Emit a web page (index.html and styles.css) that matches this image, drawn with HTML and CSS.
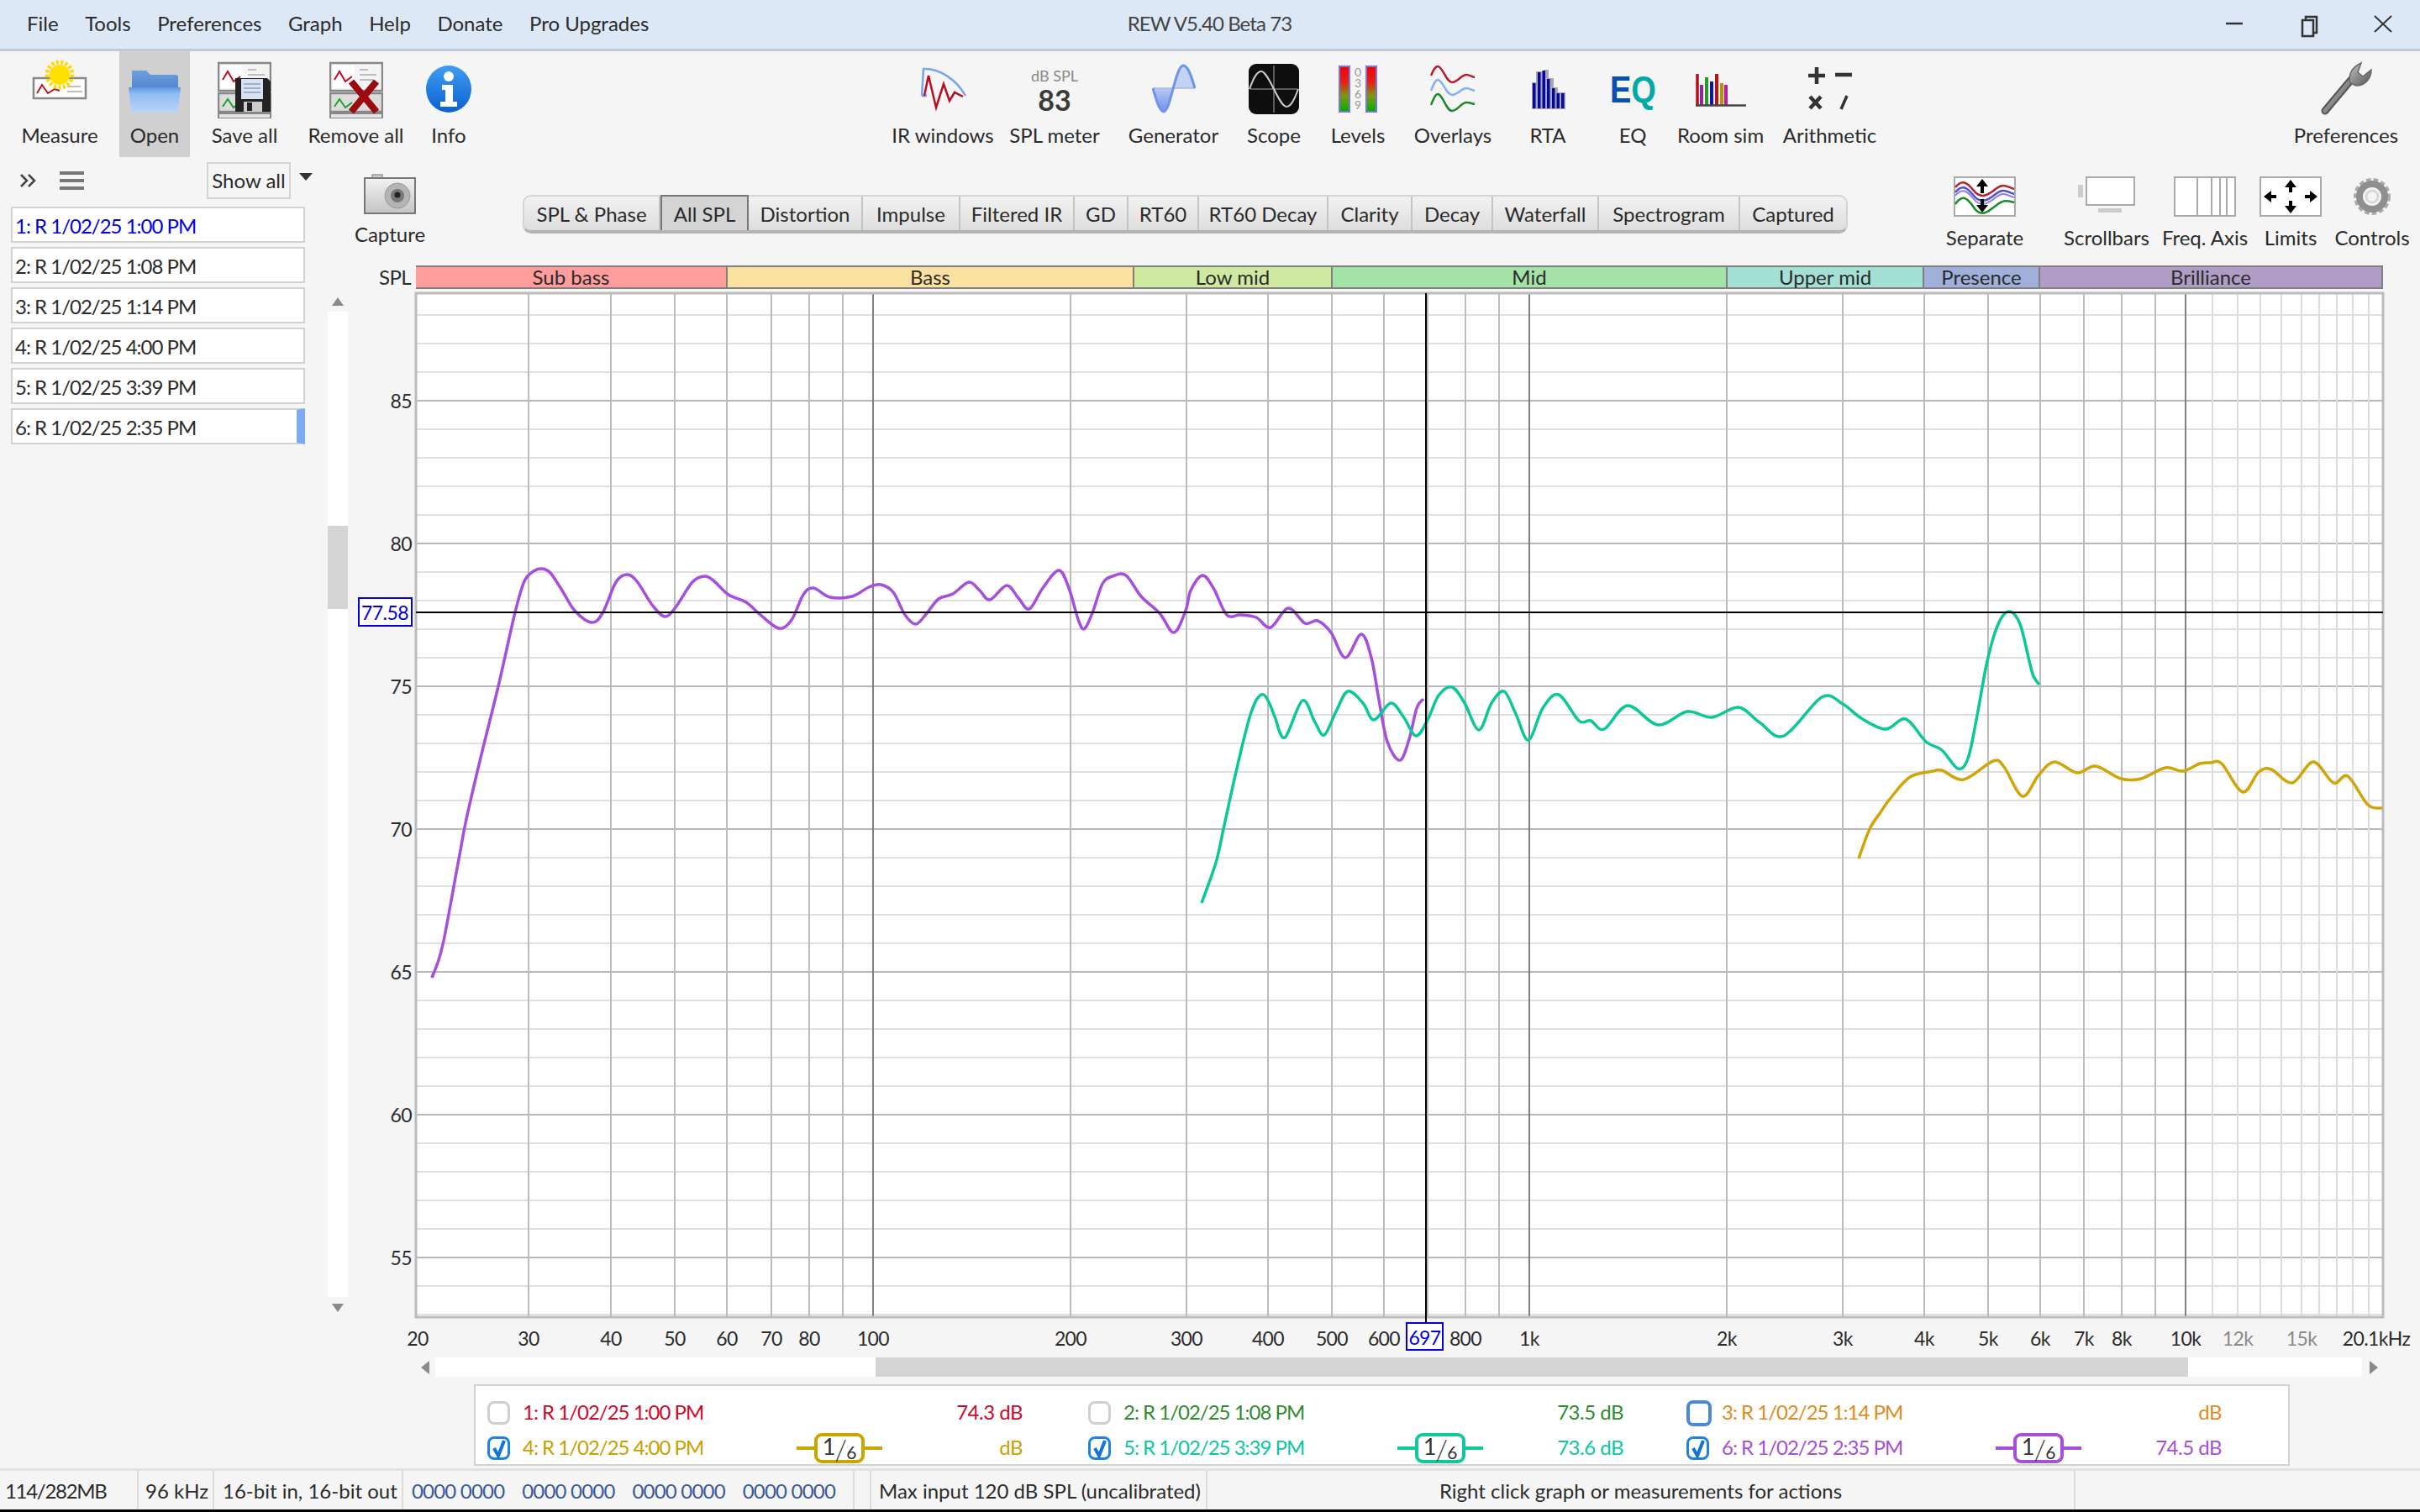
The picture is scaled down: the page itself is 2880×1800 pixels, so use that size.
FILE: index.html
```html
<!DOCTYPE html>
<html lang="en">
<head>
    <meta charset="UTF-8">
    <title>REW V5.40 Beta 73</title>
    <link rel="stylesheet" href="styles.css">
</head>
<body>
<svg class="defs" width="0" height="0">
    <defs>
        <linearGradient id="folderBack" x1="0" y1="0" x2="0" y2="1"><stop offset="0" stop-color="#6f9fe0"/><stop offset="1" stop-color="#4f82cc"/></linearGradient>
        <linearGradient id="folderFront" x1="0" y1="0" x2="0" y2="1"><stop offset="0" stop-color="#5e97e2"/><stop offset="0.25" stop-color="#8fbcf0"/><stop offset="1" stop-color="#b9d6f7"/></linearGradient>
        <linearGradient id="infoBlue" x1="0" y1="0" x2="0" y2="1"><stop offset="0" stop-color="#3f9cf2"/><stop offset="1" stop-color="#0a62d0"/></linearGradient>
        <linearGradient id="genFill" x1="0" y1="0" x2="0" y2="1"><stop offset="0" stop-color="#b9c8f4"/><stop offset="1" stop-color="#6f93ea"/></linearGradient>
        <linearGradient id="level" x1="0" y1="0" x2="0" y2="1"><stop offset="0" stop-color="#f00010"/><stop offset="0.35" stop-color="#e82010"/><stop offset="0.65" stop-color="#7a9a10"/><stop offset="1" stop-color="#00b000"/></linearGradient>
        <linearGradient id="chrome" x1="0" y1="0" x2="1" y2="1"><stop offset="0" stop-color="#c9c9c9"/><stop offset="0.5" stop-color="#8a8a8a"/><stop offset="1" stop-color="#555"/></linearGradient>
        <linearGradient id="camera" x1="0" y1="0" x2="0" y2="1"><stop offset="0" stop-color="#f2f2f2"/><stop offset="1" stop-color="#c4c4c4"/></linearGradient>
        <symbol id="cards" viewBox="0 0 64 80">
            <rect x="1" y="14" width="62" height="33" fill="#f4f4f4" stroke="#888" stroke-width="2.5"/>
            <rect x="4" y="17" width="26" height="27" fill="#fff"/>
            <path d="M6 34l6-10 7 12 8-6" fill="none" stroke="#c01020" stroke-width="2"/>
            <path d="M36 22h10M36 28h20M36 34h16" stroke="#aaa" stroke-width="1.5"/>
            <rect x="1" y="50" width="62" height="22" fill="#ddd" stroke="#888" stroke-width="2.5"/>
            <path d="M6 66l6-9 7 10 8-6" fill="none" stroke="#20a030" stroke-width="2"/>
            <rect x="1" y="74" width="62" height="6" fill="#e4e4e4" stroke="#888" stroke-width="2"/>
        </symbol>
        <symbol id="tick" viewBox="0 0 28 28">
            <path d="M8 14l5 9 7-18" fill="none" stroke="#1373d8" stroke-width="4"/>
        </symbol>
    </defs>
</svg>

<div class="app">
    <header class="titlebar">
        <nav class="menu">
            <span>File</span><span>Tools</span><span>Preferences</span><span>Graph</span><span>Help</span><span>Donate</span><span>Pro Upgrades</span>
        </nav>
        <div class="title">REW V5.40 Beta 73</div>
        <div class="winbtns">
            <svg width="230" height="40" viewBox="0 0 230 40">
                <path d="M0 20h20" stroke="#333" stroke-width="2.5"/>
                <path d="M91 16h13v19h-13zM95 16v-4h13v19h-4" fill="none" stroke="#333" stroke-width="2.5"/>
                <path d="M177 11l20 19M197 11l-20 19" stroke="#333" stroke-width="2"/>
            </svg>
        </div>
    </header>

    <section class="ribbon">
        <div class="tool">
            <svg width="70" height="80" viewBox="0 0 70 80">
                <rect x="4" y="32" width="62" height="24" fill="#fff" stroke="#888" stroke-width="2.5"/>
                <path d="M8 50l6-10 7 10 8-5 6 2" fill="none" stroke="#c01020" stroke-width="2"/>
                <path d="M44 42h16M44 48h18" stroke="#aaa" stroke-width="1.5"/>
                <circle cx="35" cy="28" r="12" fill="#ffe000"/>
                <circle cx="35" cy="28" r="15" fill="none" stroke="#ffd800" stroke-width="5" stroke-dasharray="3 2.5"/>
            </svg>
            <span class="label">Measure</span>
        </div>
        <div class="tool active">
            <svg width="64" height="80" viewBox="0 0 64 80">
                <path d="M5 23h17l5 5h30q3 0 3 3v16H5z" fill="url(#folderBack)"/>
                <path d="M1 43h62l-3 29q0 1-2 1H6q-2 0-2-1z" fill="url(#folderFront)"/>
            </svg>
            <span class="label">Open</span>
        </div>
        <div class="tool">
            <svg width="64" height="80" viewBox="0 0 64 80">
                <use href="#cards" width="64" height="80"/>
                <path d="M21 32h38l4 4v36H21z" fill="#222"/>
                <rect x="28" y="33" width="26" height="24" fill="#d8e2f2"/>
                <path d="M31 39h20M31 44h20M31 49h20" stroke="#8aa0c0" stroke-width="1.5"/>
                <rect x="31" y="60" width="22" height="12" fill="#ccc"/>
                <rect x="35" y="61" width="6" height="10" fill="#222"/>
            </svg>
            <span class="label">Save all</span>
        </div>
        <div class="tool">
            <svg width="64" height="80" viewBox="0 0 64 80">
                <use href="#cards" width="64" height="80"/>
                <path d="M26 36l30 36M56 36l-30 36" stroke="#9c0a10" stroke-width="8"/>
            </svg>
            <span class="label">Remove all</span>
        </div>
        <div class="tool">
            <svg width="56" height="80" viewBox="0 0 56 80">
                <ellipse cx="28" cy="45" rx="27" ry="28" fill="url(#infoBlue)"/>
                <circle cx="28" cy="30" r="6" fill="#fff"/>
                <path d="M20 40h13v20h5v6H18v-6h6V46h-4z" fill="#fff"/>
            </svg>
            <span class="label">Info</span>
        </div>
        <div></div>
        <div class="tool">
            <svg width="56" height="80" viewBox="0 0 56 80">
                <path d="M3 53L5 21C25 20 45 35 55 53" fill="none" stroke="#7da4ec" stroke-width="2.5"/>
                <path d="M3 53h6" stroke="#7da4ec" stroke-width="3"/>
                <path d="M6 53L11 29 20 67 29 39 36 59 42 49 52 54" fill="none" stroke="#b80e1e" stroke-width="2.5"/>
            </svg>
            <span class="label">IR windows</span>
        </div>
        <div class="tool">
            <div class="meter"><span class="meter-unit">dB SPL</span><span class="meter-val">83</span></div>
            <span class="label">SPL meter</span>
        </div>
        <div class="tool">
            <svg width="52" height="80" viewBox="0 0 52 80">
                <path d="M1 44C5 58 9 72 14 72 18 72 21 58 24 44z" fill="url(#genFill)"/>
                <path d="M24 44C28 30 32 17 37 17 43 17 47 30 51 44z" fill="#c4d2f6"/>
                <path d="M1 44h50" stroke="#a8b8d8" stroke-width="1.5"/>
                <path d="M1 44C5 58 9 72 14 72 22 72 28 17 37 17 43 17 47 30 51 44" fill="none" stroke="#6d95ec" stroke-width="3"/>
            </svg>
            <span class="label">Generator</span>
        </div>
        <div class="tool">
            <svg width="60" height="80" viewBox="0 0 60 80">
                <rect x="0" y="15" width="60" height="60" rx="9" fill="#0e0e0e"/>
                <path d="M2 45h56M30 17v56" stroke="#777" stroke-width="1.5"/>
                <path d="M1 45C6 31 10 24 15 24 24 24 36 66 45 66 50 66 54 59 59 45" fill="none" stroke="#ccc" stroke-width="2"/>
            </svg>
            <span class="label">Scope</span>
        </div>
        <div class="tool">
            <svg width="46" height="80" viewBox="0 0 46 80">
                <rect x="1" y="18" width="12" height="54" fill="url(#level)" stroke="#7878dc" stroke-width="2"/>
                <rect x="33" y="18" width="12" height="54" fill="url(#level)" stroke="#7878dc" stroke-width="2"/>
                <text class="scale" x="23" y="30">0</text>
                <text class="scale" x="23" y="43">3</text>
                <text class="scale" x="23" y="56">6</text>
                <text class="scale" x="23" y="69">9</text>
            </svg>
            <span class="label">Levels</span>
        </div>
        <div class="tool">
            <svg width="54" height="80" viewBox="0 0 54 80">
                <path d="M1 29C4 22 6 18 9 18 15 18 19 37 26 37 33 37 37 28 43 28 47 28 49 30 53 31" fill="none" stroke="#b02030" stroke-width="2.5"/>
                <path d="M1 47C4 40 6 34 9 34 15 34 19 52 26 52 33 52 37 44 43 44 47 44 49 46 53 47" fill="none" stroke="#86aef2" stroke-width="2.5"/>
                <path d="M1 64C4 57 6 51 9 51 15 51 19 71 26 71 33 71 37 61 43 61 47 61 49 62 53 63" fill="none" stroke="#1c8a2a" stroke-width="2.5"/>
            </svg>
            <span class="label">Overlays</span>
        </div>
        <div class="tool">
            <svg width="43" height="80" viewBox="0 0 43 80">
                <path d="M2 69V37h5V24h10V22h5v10h6v11h5v6h9v20z" fill="#a8a8b4"/>
                <path d="M3 68V38h3.500v30zM9 68V25h3.500v43zM14.500 68V23H18v45zM20 68V33h3.500v35zM26 68V44h3.500v24zM31.500 68V50H35v18zM37 68V50h3.500v18z" fill="#08089a"/>
            </svg>
            <span class="label">RTA</span>
        </div>
        <div class="tool">
            <svg width="56" height="80" viewBox="0 0 56 80">
                <text class="eq" x="0" y="0" transform="translate(1 61) scale(1 1.170)"><tspan class="eq-e">E</tspan><tspan class="eq-q">Q</tspan></text>
            </svg>
            <span class="label">EQ</span>
        </div>
        <div class="tool">
            <svg width="60" height="80" viewBox="0 0 60 80">
                <path d="M2 27v37" stroke="#b01020" stroke-width="3.500"/>
                <path d="M7 40v24" stroke="#a020a0" stroke-width="4"/>
                <path d="M13 31v33" stroke="#20a020" stroke-width="4"/>
                <path d="M19 36v28" stroke="#1010c0" stroke-width="4"/>
                <path d="M25 27v37" stroke="#c01010" stroke-width="4"/>
                <path d="M31 38v26" stroke="#c09000" stroke-width="4"/>
                <path d="M36 40v24" stroke="#b020a0" stroke-width="4"/>
                <path d="M0 64.500h60" stroke="#444" stroke-width="2.500"/>
            </svg>
            <span class="label">Room sim</span>
        </div>
        <div class="tool">
            <svg width="56" height="80" viewBox="0 0 56 80">
                <path d="M12 19v20M2 29h20M34 28h20" stroke="#333" stroke-width="4.500"/>
                <path d="M4 54l13 14M17 54L4 68" stroke="#333" stroke-width="4.500"/>
                <path d="M48 53l-7 16" stroke="#333" stroke-width="3.500"/>
            </svg>
            <span class="label">Arithmetic</span>
        </div>
        <div></div>
        <div class="tool">
            <svg width="64" height="80" viewBox="0 0 64 80">
                <path d="M7 71L38 34" stroke="#555" stroke-width="9" stroke-linecap="round"/>
                <path d="M7 71L38 34" stroke="url(#chrome)" stroke-width="5" stroke-linecap="round"/>
                <path d="M37 38C34 28 39 19 50 14l-4 11 6 5 10-8C62 33 54 41 44 41z" fill="url(#chrome)" stroke="#666" stroke-width="1.500"/>
            </svg>
            <span class="label">Preferences</span>
        </div>
    </section>

    <div class="content">
        <aside class="side">
            <div class="side-tools">
                <svg class="chevrons" width="22" height="18" viewBox="0 0 22 18">
                    <path d="M2 2l7 7-7 7M11 2l7 7-7 7" fill="none" stroke="#444" stroke-width="2.500"/>
                </svg>
                <span class="burger"></span>
                <span class="combo">Show all</span>
                <span class="combo-arrow"></span>
            </div>
            <ul class="meas-list">
                <li class="first">1: R 1/02/25 1:00 PM</li>
                <li>2: R 1/02/25 1:08 PM</li>
                <li>3: R 1/02/25 1:14 PM</li>
                <li>4: R 1/02/25 4:00 PM</li>
                <li>5: R 1/02/25 3:39 PM</li>
                <li class="current">6: R 1/02/25 2:35 PM</li>
            </ul>
        </aside>

        <main class="main">
            <div class="toolbar2">
                <div class="tool2 capture">
                    <svg width="62" height="75" viewBox="0 0 62 75">
                        <path d="M10 25v-4h12v4" fill="#ccc" stroke="#999" stroke-width="1.500"/>
                        <rect x="1" y="25" width="60" height="42" fill="url(#camera)" stroke="#777" stroke-width="2"/>
                        <circle cx="40" cy="46" r="15" fill="#b4b4b4" stroke="#999"/>
                        <circle cx="40" cy="46" r="8" fill="#777"/>
                        <circle cx="40" cy="45" r="3.500" fill="#222"/>
                    </svg>
                    <span class="label">Capture</span>
                </div>
                <div class="tabs">
                    <span class="tab w164">SPL &amp; Phase</span>
                    <span class="tab w105 selected">All SPL</span>
                    <span class="tab w136">Distortion</span>
                    <span class="tab w116">Impulse</span>
                    <span class="tab w136">Filtered IR</span>
                    <span class="tab w64">GD</span>
                    <span class="tab w84">RT60</span>
                    <span class="tab w154">RT60 Decay</span>
                    <span class="tab w100">Clarity</span>
                    <span class="tab w96">Decay</span>
                    <span class="tab w126">Waterfall</span>
                    <span class="tab w168">Spectrogram</span>
                    <span class="tab w128">Captured</span>
                </div>
                <div class="tool2 separate">
                    <svg width="74" height="75" viewBox="0 0 74 75">
                        <rect x="1" y="24" width="72" height="46" fill="#fff" stroke="#aaa" stroke-width="2"/>
                        <path d="M2 36C10 26 16 30 24 40S40 46 50 38 64 36 72 38" fill="none" stroke="#b42030" stroke-width="2.500"/>
                        <path d="M2 42C10 32 16 36 24 46S40 52 50 44 64 42 72 44" fill="none" stroke="#5050d0" stroke-width="2.500"/>
                        <path d="M2 46C10 36 16 40 24 50S40 56 50 48 64 46 72 48" fill="none" stroke="#8a80e0" stroke-width="2"/>
                        <path d="M2 56C10 44 16 48 24 60S40 66 50 58 64 52 72 54" fill="none" stroke="#1c8a2a" stroke-width="2.500"/>
                        <path d="M34 26l-7 9h5v8h4v-8h5zM34 66l-7-9h5v-7h4v7h5z" fill="#000"/>
                    </svg>
                    <span class="label">Separate</span>
                </div>
                <div class="tool2 scrollbars">
                    <svg width="70" height="75" viewBox="0 0 70 75">
                        <rect x="1" y="33" width="6" height="15" fill="#ccc"/>
                        <rect x="11" y="24" width="57" height="33" fill="#fff" stroke="#aaa" stroke-width="2"/>
                        <rect x="25" y="61" width="28" height="5" fill="#ccc"/>
                    </svg>
                    <span class="label">Scrollbars</span>
                </div>
                <div class="tool2 freqaxis">
                    <svg width="74" height="75" viewBox="0 0 74 75">
                        <rect x="1" y="24" width="72" height="46" fill="#fff" stroke="#aaa" stroke-width="2"/>
                        <path d="M28 24v46M45 24v46M55 24v46M63 24v46" stroke="#aaa" stroke-width="2"/>
                    </svg>
                    <span class="label">Freq. Axis</span>
                </div>
                <div class="tool2 limits">
                    <svg width="74" height="75" viewBox="0 0 74 75">
                        <rect x="1" y="24" width="72" height="46" fill="#fff" stroke="#aaa" stroke-width="2"/>
                        <path d="M37 27l-7 9h5v6h4v-6h5zM37 67l-7-9h5v-6h4v6h5zM5 47l9-7v5h6v4h-6v5zM69 47l-9-7v5h-6v4h6v5z" fill="#000"/>
                    </svg>
                    <span class="label">Limits</span>
                </div>
                <div class="tool2 controls">
                    <svg width="46" height="75" viewBox="0 0 46 75">
                        <circle cx="23" cy="47" r="18" fill="none" stroke="#aaa" stroke-width="8" stroke-dasharray="5 2.800"/>
                        <circle cx="23" cy="47" r="15" fill="none" stroke="#8f8f8f" stroke-width="8"/>
                        <circle cx="23" cy="47" r="7" fill="none" stroke="#d8d8d8" stroke-width="3"/>
                    </svg>
                    <span class="label">Controls</span>
                </div>
            </div>

            <div class="chart-row">
                <div class="vscroll">
                    <span class="arrow up"></span>
                    <div class="vtrack"><div class="vthumb"></div></div>
                    <span class="arrow down"></span>
                </div>
                <div class="chart">
                    <div class="bands">
                        <span class="spl">SPL</span>
                        <span class="band sub">Sub bass</span>
                        <span class="band bass">Bass</span>
                        <span class="band low">Low mid</span>
                        <span class="band mid">Mid</span>
                        <span class="band upper">Upper mid</span>
                        <span class="band presence">Presence</span>
                        <span class="band brilliance">Brilliance</span>
                    </div>
                    <svg id="plot" class="plot" width="2466" height="1272" viewBox="414 344 2466 1272"></svg>
                </div>
            </div>

            <div class="hscroll">
                <span class="arrow left"></span>
                <div class="htrack"><div class="hthumb"></div></div>
                <span class="arrow right"></span>
            </div>

            <div class="legend">
                <div class="meas">
                    <span class="cb"></span><span class="name red">1: R 1/02/25 1:00 PM</span><span></span><span class="val red">74.3 dB</span>
                </div>
                <div class="meas col2">
                    <span class="cb"></span><span class="name green">2: R 1/02/25 1:08 PM</span><span></span><span class="val green">73.5 dB</span>
                </div>
                <div class="meas col3">
                    <span class="cb focus"></span><span class="name orange">3: R 1/02/25 1:14 PM</span><span></span><span class="val orange">dB</span>
                </div>
                <div class="meas">
                    <span class="cb checked"><svg width="28" height="28"><use href="#tick"/></svg></span><span class="name gold">4: R 1/02/25 4:00 PM</span>
                    <span class="smooth gold-line"><span class="pill"><span class="num">1</span><span class="slash">/</span><span class="den">6</span></span></span>
                    <span class="val gold">dB</span>
                </div>
                <div class="meas col2">
                    <span class="cb checked"><svg width="28" height="28"><use href="#tick"/></svg></span><span class="name teal">5: R 1/02/25 3:39 PM</span>
                    <span class="smooth teal-line"><span class="pill"><span class="num">1</span><span class="slash">/</span><span class="den">6</span></span></span>
                    <span class="val teal">73.6 dB</span>
                </div>
                <div class="meas col3">
                    <span class="cb checked"><svg width="28" height="28"><use href="#tick"/></svg></span><span class="name purple">6: R 1/02/25 2:35 PM</span>
                    <span class="smooth purple-line"><span class="pill"><span class="num">1</span><span class="slash">/</span><span class="den">6</span></span></span>
                    <span class="val purple">74.5 dB</span>
                </div>
            </div>
        </main>
    </div>

    <footer class="status">
        <span class="cell c-mem">114/282MB</span>
        <span class="cell c-rate">96 kHz</span>
        <span class="cell c-bits">16-bit in, 16-bit out</span>
        <span class="cell c-bin"><span>0000 0000</span><span>0000 0000</span><span>0000 0000</span><span>0000 0000</span></span>
        <span class="cell c-gap"></span>
        <span class="cell c-input">Max input 120 dB SPL (uncalibrated)</span>
        <span class="cell c-hint">Right click graph or measurements for actions</span>
        <span class="cell c-end"></span>
    </footer>
</div>
<script src="script.js"></script>
</body>
</html>
```
FILE: styles.css
```css
* {
    box-sizing: border-box;
}

body {
    margin: 0;
    font-family: Lato, "Noto Sans", sans-serif;
    font-size: 24px;
    color: #2b2b2b;
    background-color: #f5f5f5;
}

.defs {
    position: absolute;
}

.app {
    width: 2880px;
    height: 1800px;
    display: flex;
    flex-direction: column;
    overflow: hidden;
}

/* title bar */
.titlebar {
    height: 61px;
    flex: none;
    display: grid;
    grid-template-columns: 1fr auto 1fr;
    align-items: center;
    background-color: #dde8f6;
    border-bottom: 3px solid #bccbdc;
    padding: 0 33px 3px 32px;
}

.menu {
    display: flex;
    gap: 31.500px;
}

.title {
    color: #444;
    letter-spacing: -0.900px;
}

.winbtns {
    justify-self: end;
    margin-right: -32px;
    height: 40px;
}

.winbtns svg {
    display: block;
}

/* top ribbon */
.ribbon {
    height: 126px;
    flex: none;
    display: grid;
    grid-template-columns: 142px 84px 130px 135px 86px 485px 120px 146px 137px 102px 98px 128px 98px 104px 105px 155px 467px 140px;
}

.tool {
    display: flex;
    flex-direction: column;
    align-items: center;
}

.tool svg {
    display: block;
}

.tool.active {
    background-color: #d0d0d0;
}

.label {
    line-height: 32px;
    margin-top: 4px;
    white-space: nowrap;
}

.meter {
    height: 80px;
    display: flex;
    flex-direction: column;
    align-items: center;
    padding-top: 17px;
}

.meter-unit {
    font-size: 18px;
    line-height: 24px;
    color: #888;
}

.meter-val {
    font-size: 34px;
    font-weight: 700;
    line-height: 34px;
    color: #3a3a3a;
}

.scale {
    font-size: 14px;
    fill: #999;
    text-anchor: middle;
}

.eq {
    font-family: "Liberation Sans", sans-serif;
    font-size: 38px;
    font-weight: 700;
}

.eq-e {
    fill: #0a50b4;
}

.eq-q {
    fill: #00a8a8;
}

/* body */
.content {
    flex: 1;
    display: grid;
    grid-template-columns: 380px 2500px;
    min-height: 0;
}

.side-tools {
    height: 59px;
    display: flex;
    align-items: center;
    padding-bottom: 4px;
}

.chevrons {
    margin-left: 23px;
}

.burger {
    width: 29px;
    height: 22px;
    margin-left: 26px;
    border-top: 4px solid #777;
    border-bottom: 4px solid #777;
    background: linear-gradient(#777, #777) center / 100% 4px no-repeat;
}

.combo {
    width: 100px;
    height: 44px;
    margin-left: 146px;
    border: 2px solid #d4d4d4;
    text-align: center;
    line-height: 40px;
}

.combo-arrow {
    margin-left: 10px;
    margin-bottom: 8px;
    border-left: 8px solid transparent;
    border-right: 8px solid transparent;
    border-top: 9px solid #333;
}

.meas-list {
    list-style: none;
    margin: 0;
    padding: 0 17px 0 13px;
}

.meas-list li {
    height: 43px;
    margin-bottom: 5px;
    padding-left: 3px;
    line-height: 41px;
    background-color: #fff;
    border: 2px solid #d2d2d2;
    white-space: nowrap;
    letter-spacing: -1px;
}

.meas-list .first {
    color: #0000e0;
}

.meas-list .current {
    border-right: 10px solid #7baaf7;
}

/* second toolbar */
.toolbar2 {
    height: 129px;
    display: flex;
    align-items: flex-start;
}

.tool2 {
    flex: none;
    display: flex;
    flex-direction: column;
    align-items: center;
}

.tool2 svg {
    display: block;
}

.tool2 .label {
    margin-top: 5px;
}

.capture {
    width: 100px;
    margin-left: 34px;
}

.capture .label {
    margin-top: 1px;
}

.separate {
    width: 100px;
    margin-left: 113px;
}

.scrollbars {
    width: 134px;
    margin-left: 28px;
}

.freqaxis {
    width: 100px;
}

.limits {
    width: 104px;
}

.controls {
    width: 90px;
}

.tabs {
    flex: none;
    display: flex;
    width: 1577px;
    height: 46px;
    margin: 45px 0 0 108px;
    border-radius: 10px;
    background: linear-gradient(#f2f2f2, #dedede);
    border: 2px solid #d4d4d4;
    border-bottom: 4px solid #b4b4b4;
}

.tab {
    display: flex;
    align-items: center;
    justify-content: center;
    height: 100%;
    border-right: 2px solid #c4c4c4;
    white-space: nowrap;
}

.tab:last-child {
    border-right: none;
}

.tab.selected {
    background-color: #d4d4d4;
    border: 2px solid #777;
    border-bottom: none;
    margin-top: -2px;
    height: calc(100% + 2px);
}

.w64 { width: 64px; }
.w84 { width: 84px; }
.w96 { width: 96px; }
.w100 { width: 100px; }
.w105 { width: 105px; }
.w116 { width: 116px; }
.w126 { width: 126px; }
.w128 { width: 126px; }
.w136 { width: 136px; }
.w154 { width: 154px; }
.w164 { width: 162px; }
.w168 { width: 168px; }

/* graph */
.chart-row {
    height: 1300px;
    display: flex;
}

.vscroll {
    width: 24px;
    margin-left: 10px;
    padding-top: 38px;
    height: 1260px;
    display: flex;
    flex-direction: column;
    align-items: center;
    flex: none;
}

.arrow {
    display: block;
    flex: none;
    border-style: solid;
    border-color: transparent;
}

.arrow.up {
    border-width: 0 7px 10px;
    border-bottom-color: #8a8a8a;
}

.arrow.down {
    border-width: 10px 7px 0;
    border-top-color: #8a8a8a;
    margin-top: 8px;
}

.arrow.left {
    border-width: 8px 10px 8px 0;
    border-right-color: #8a8a8a;
}

.arrow.right {
    border-width: 8px 0 8px 10px;
    border-left-color: #8a8a8a;
}

.vtrack {
    width: 24px;
    height: 1173px;
    margin-top: 7px;
    background-color: #fff;
}

.vthumb {
    height: 99px;
    margin-top: 255px;
    background-color: #d4d4d4;
}

.chart {
    flex: none;
    width: 2466px;
}

.bands {
    display: flex;
    height: 28px;
}

.spl {
    width: 81px;
    padding-right: 6px;
    text-align: right;
    line-height: 28px;
    letter-spacing: -0.600px;
}

.band {
    display: block;
    text-align: center;
    line-height: 24px;
    border-top: 2px solid #808080;
    border-bottom: 2px solid #808080;
    border-right: 2px solid #808080;
}

.sub { width: 371px; background-color: #ff9c9c; }
.bass { width: 484px; background-color: #fbe1a0; }
.low { width: 236px; background-color: #cfeaa0; }
.mid { width: 470px; background-color: #a3e3a8; }
.upper { width: 234px; background-color: #a3e0d6; }
.presence { width: 138px; background-color: #a0b0da; }
.brilliance { width: 408px; background-color: #b09cc4; }

.plot {
    display: block;
}

.ax {
    font-family: Lato, "Noto Sans", sans-serif;
    font-size: 23px;
    letter-spacing: -0.600px;
    fill: #2b2b2b;
    dominant-baseline: central;
}

.ax.faint {
    fill: #8a8a8a;
}

.ax.cursor {
    fill: #0000e0;
}

/* horizontal scrollbar */
.hscroll {
    height: 23px;
    display: flex;
    align-items: center;
    padding-left: 121px;
}

.htrack {
    width: 2293px;
    height: 23px;
    margin: 0 9px 0 7px;
    background-color: #fff;
}

.hthumb {
    width: 1562px;
    height: 23px;
    margin-left: 524px;
    background-color: #d4d4d4;
}

/* legend */
.legend {
    width: 2161px;
    height: 97px;
    margin: 9px 0 0 184px;
    padding-top: 11px;
    background-color: #fff;
    border: 2px solid #d2d2d2;
    display: grid;
    grid-template-columns: 729px 712px 712px;
    grid-auto-rows: 42px;
}

.meas {
    display: grid;
    grid-template-columns: 42px 326px 102px 167px;
    align-items: center;
    padding-left: 14px;
    white-space: nowrap;
}

.meas.col2 {
    padding-left: 0;
}

.meas.col3 {
    padding-left: 0;
}

.name {
    letter-spacing: -1px;
    padding-bottom: 3px;
}

.cb {
    width: 27px;
    height: 28px;
    border: 3px solid #cfcfcf;
    border-radius: 8px;
    background-color: #fff;
}

.cb.focus {
    width: 30px;
    height: 31px;
    border: 4px solid #4a88d8;
}

.cb.checked {
    border-color: #1e82e6;
}

.cb svg {
    display: block;
    margin: -3px;
}

.val {
    text-align: right;
    letter-spacing: -0.500px;
    padding-bottom: 3px;
}

.red { color: #cc0a2a; }
.green { color: #2e8b2e; }
.orange { color: #e28b1c; }
.gold { color: #c8a000; }
.teal { color: #0ac8a0; }
.purple { color: #a64fd8; }

.smooth {
    height: 36px;
    display: flex;
    align-items: center;
    justify-content: center;
    background: linear-gradient(var(--c), var(--c)) center / 100% 4px no-repeat;
}

.gold-line { --c: #cca400; }
.teal-line { --c: #10c89c; }
.purple-line { --c: #a64fd8; }

.pill {
    width: 60px;
    height: 36px;
    display: flex;
    justify-content: center;
    align-items: center;
    background-color: #fff;
    border: 4px solid var(--c);
    border-radius: 9px;
    color: #333;
}

.num {
    font-size: 27px;
    margin-top: -6px;
}

.slash {
    font-size: 34px;
    font-weight: 300;
    margin: 0 -1px;
}

.den {
    font-size: 21px;
    margin-top: 8px;
}

/* status bar */
.status {
    height: 52px;
    flex: none;
    display: flex;
    border-top: 3px solid #e2e2e2;
    border-bottom: 3px solid #000;
    background-color: #f5f5f5;
}

.cell {
    flex: none;
    display: flex;
    align-items: center;
    border-right: 2px solid #dcdcdc;
    white-space: nowrap;
}

.c-mem { width: 165px; padding-left: 6px; letter-spacing: -1.300px; }
.c-rate { width: 90px; padding-left: 8px; }
.c-bits { width: 225px; padding-left: 10px; }
.c-bin { width: 537px; padding-left: 10px; color: #3a5a9a; letter-spacing: -0.800px; }
.c-bin span { width: 132px; }
.c-gap { width: 20px; }
.c-input { width: 400px; padding-left: 9px; }
.c-hint { width: 1033px; justify-content: center; }
.c-end { flex: 1; border-right: none; }
```
FILE: script.js
```js
// draws the graph: grid, axis labels, traces. coordinates are page pixels.
var NS = "http://www.w3.org/2000/svg";
var plot = document.getElementById("plot");

var LEFT = 495, RIGHT = 2836, TOP = 349, BOTTOM = 1568;

function xOf(f) {
    var perDecade = f < 100 ? 784 : 781;
    return Math.round(1039 + perDecade * (Math.log10(f) - 2));
}

function yOf(db) {
    return 647 + (80 - db) * 34;
}

function add(tag, attrs, text) {
    var el = document.createElementNS(NS, tag);
    for (var k in attrs) el.setAttribute(k, attrs[k]);
    if (text) el.textContent = text;
    plot.appendChild(el);
    return el;
}

function line(x1, y1, x2, y2, color, width) {
    add("line", { x1: x1, y1: y1, x2: x2, y2: y2, stroke: color, "stroke-width": width || 2 });
}

function smooth(pts) {
    var d = "M" + pts[0][0] + " " + pts[0][1];
    for (var i = 0; i < pts.length - 1; i++) {
        var p0 = pts[i - 1] || pts[i], p1 = pts[i], p2 = pts[i + 1], p3 = pts[i + 2] || p2;
        d += "C" + (p1[0] + (p2[0] - p0[0]) / 6) + " " + (p1[1] + (p2[1] - p0[1]) / 6) + " " +
            (p2[0] - (p3[0] - p1[0]) / 6) + " " + (p2[1] - (p3[1] - p1[1]) / 6) + " " + p2[0] + " " + p2[1];
    }
    return d;
}

function trace(pts, color) {
    add("path", { d: smooth(pts), fill: "none", stroke: color, "stroke-width": 3.5, "stroke-linejoin": "round" });
}

add("rect", { x: LEFT, y: TOP, width: RIGHT - LEFT, height: BOTTOM - TOP, fill: "#fff" });

// horizontal lines, one per dB
for (var db = 53; db <= 88; db++) {
    line(LEFT, yOf(db), RIGHT, yOf(db), db % 5 === 0 ? "#b8b8b8" : "#e0e0e0");
}

// vertical lines
[1, 10, 100, 1000].forEach(function (scale) {
    for (var m = 2; m <= 9; m++) {
        var f = m * 10 * scale;
        if (f >= 20000 || f === 20) continue;
        line(xOf(f), TOP, xOf(f), BOTTOM, "#bcbcbc");
    }
});
[100, 1000, 10000].forEach(function (f) {
    line(xOf(f), TOP, xOf(f), BOTTOM, "#808080");
});
for (var k = 11; k < 20; k++) {
    line(xOf(k * 1000), TOP, xOf(k * 1000), BOTTOM, "#dcdcdc");
}

add("rect", { x: LEFT, y: TOP, width: RIGHT - LEFT, height: BOTTOM - TOP, fill: "none", stroke: "#bcbcbc", "stroke-width": 3 });

// axis labels
[85, 80, 75, 70, 65, 60, 55].forEach(function (db) {
    add("text", { x: 490, y: yOf(db), "class": "ax", "text-anchor": "end" }, String(db));
});
[[20, "20", 497], [30, "30"], [40, "40"], [50, "50"], [60, "60"], [70, "70"], [80, "80"], [100, "100"], [200, "200"],
 [300, "300"], [400, "400"], [500, "500"], [600, "600"], [800, "800"], [1000, "1k"], [2000, "2k"], [3000, "3k"],
 [4000, "4k"], [5000, "5k"], [6000, "6k"], [7000, "7k"], [8000, "8k"], [10000, "10k"],
 [12000, "12k", 0, "faint"], [15000, "15k", 0, "faint"], [20100, "20.1kHz", 2828]].forEach(function (t) {
    add("text", { x: t[2] || xOf(t[0]), y: 1593, "class": "ax " + (t[3] || ""), "text-anchor": "middle" }, t[1]);
});

var purple = [[514,1164],[522,1143],[528,1120],[535,1083],[541,1050],[548,1012],[555,975],[572,902],[593,817],[613,729],[624,692],[635,680],[645,677],[655,682],[669,703],[684,727],[704,741],[717,730],[733,693],[746,684],[758,692],[776,720],[791,734],[804,723],[824,693],[839,686],[850,692],[867,708],[888,717],[905,732],[927,748],[942,738],[956,708],[968,700],[988,711],[1014,710],[1034,699],[1048,696],[1063,705],[1077,732],[1090,743],[1103,730],[1117,713],[1134,707],[1153,693],[1166,703],[1178,714],[1198,697],[1212,712],[1225,725],[1241,700],[1260,679],[1272,700],[1284,740],[1291,748],[1301,727],[1312,695],[1324,686],[1340,685],[1358,710],[1380,730],[1397,753],[1411,727],[1417,703],[1431,685],[1444,700],[1460,732],[1476,732],[1495,735],[1512,747],[1533,724],[1553,742],[1568,739],[1584,753],[1601,783],[1620,755],[1632,783],[1641,833],[1651,883],[1666,905],[1677,880],[1686,843],[1694,832]];

var teal = [[1430,1075],[1447,1027],[1456,987],[1464,950],[1471,919],[1479,885],[1488,851],[1496,832],[1504,827],[1511,838],[1517,853],[1529,878],[1550,834],[1565,860],[1576,875],[1590,847],[1604,823],[1622,837],[1635,857],[1655,837],[1670,853],[1685,876],[1699,857],[1712,828],[1728,818],[1743,837],[1760,869],[1775,837],[1790,823],[1804,850],[1819,881],[1836,843],[1855,827],[1879,858],[1893,858],[1909,868],[1937,840],[1973,863],[2008,847],[2037,854],[2069,842],[2094,860],[2123,876],[2168,830],[2193,838],[2215,855],[2244,868],[2268,856],[2292,883],[2311,893],[2330,915],[2342,903],[2352,857],[2365,787],[2378,743],[2391,728],[2404,743],[2415,787],[2420,805],[2427,815]];

var gold = [[2212,1022],[2225,987],[2238,967],[2250,950],[2273,925],[2300,918],[2311,917],[2337,928],[2372,906],[2385,913],[2407,948],[2426,923],[2445,907],[2472,920],[2494,912],[2524,927],[2548,927],[2577,914],[2598,918],[2618,909],[2631,908],[2644,909],[2669,943],[2688,919],[2703,916],[2728,932],[2753,907],[2777,932],[2794,924],[2818,958],[2835,962]];

trace(purple, "#a64fdc");
trace(teal, "#0cc898");
trace(gold, "#cfa50a");

// cursor
line(LEFT, 729, RIGHT, 729, "#000");
line(1697, TOP, 1697, 1574, "#000");
add("rect", { x: 427, y: 712, width: 63, height: 33, fill: "#fff", stroke: "#0000e0", "stroke-width": 2 });
add("text", { x: 458, y: 729, "class": "ax cursor", "text-anchor": "middle" }, "77.58");
add("rect", { x: 1674, y: 1575, width: 43, height: 32, fill: "#fff", stroke: "#0000e0", "stroke-width": 2 });
add("text", { x: 1695.5, y: 1592, "class": "ax cursor", "text-anchor": "middle" }, "697");
```
